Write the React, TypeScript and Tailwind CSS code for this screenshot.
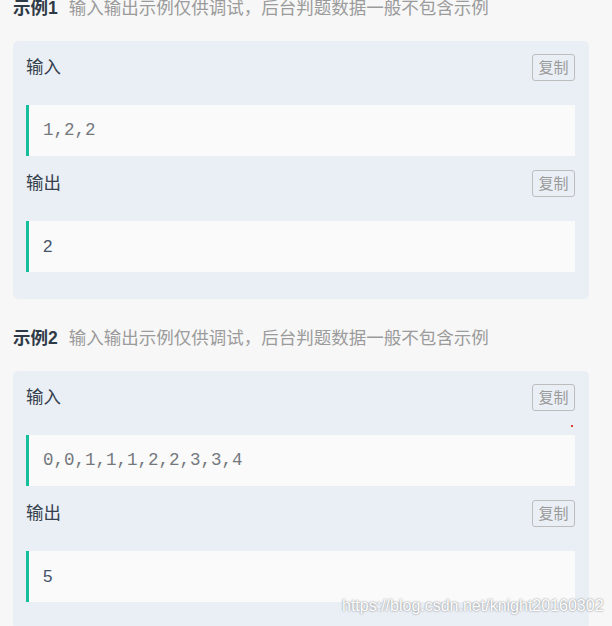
import React from 'react';

const cjk = "font-['Liberation_Sans','Noto_Sans_CJK_SC',sans-serif]";

type Example = { title: string; input: string; output: string };

const examples: Example[] = [
  { title: '示例1', input: '1,2,2', output: '2' },
  { title: '示例2', input: '0,0,1,1,1,2,2,3,3,4', output: '5' },
];

function CopyButton() {
  return (
    <button
      className={`${cjk} w-[43px] h-[27px] flex items-center justify-center rounded-[3px] border border-[#bdbdbd] text-[15px] leading-none text-[#9a9a9a]`}
    >
      复制
    </button>
  );
}

function Block({ label, value, mono }: { label: string; value: string; mono: boolean }) {
  return (
    <div>
      <div className="h-[27px] mb-[24px] flex items-center justify-between">
        <span className={`${cjk} text-[17.5px] leading-none text-[#35404d]`}>{label}</span>
        <CopyButton />
      </div>
      <div className="h-[51px] flex items-center bg-[#fafafa] border-l-[3px] border-[#16bf9c] pl-[14px]">
        {mono ? (
          <span className="font-['Liberation_Mono',monospace] text-[17.5px] leading-none text-[#74787d]">{value}</span>
        ) : (
          <span className={`${cjk} text-[17px] leading-none text-[#44526a]`}>{value}</span>
        )}
      </div>
    </div>
  );
}

function ExampleCard({ ex, first }: { ex: Example; first: boolean }) {
  return (
    <section className={first ? '' : 'mt-[31px]'}>
      <div className={`${cjk} h-[17px] flex items-center`}>
        <span className="text-[17.5px] font-bold text-[#2f3a47] leading-none">{ex.title}</span>
        <span className="ml-[11px] text-[17.5px] text-[#9b9b9b] leading-none">
          输入输出示例仅供调试，后台判题数据一般不包含示例
        </span>
      </div>
      <div className="mt-[24px] bg-[#eaeff6] rounded-[5px] pl-[13px] pr-[14px] pt-[13px] pb-[27px]">
        <Block label="输入" value={ex.input} mono={true} />
        <div className="mt-[14px]">
          <Block label="输出" value={ex.output} mono={false} />
        </div>
      </div>
    </section>
  );
}

export default function App() {
  return (
    <div className="relative w-[612px] h-[626px] overflow-hidden bg-[#f7f7f7]">
      <div className="w-[576px] ml-[13px]">
        {examples.map((ex, i) => (
          <ExampleCard key={ex.title} ex={ex} first={i === 0} />
        ))}
      </div>
      {/* stray red pixel */}
      <span className="absolute left-[571px] top-[425px] w-[2px] h-[2px] bg-[#e53935]" />
      {/* watermark */}
      <span className="absolute left-[342px] top-[598px] font-['Liberation_Sans',sans-serif] text-[16px] leading-none text-white [text-shadow:0_0_2px_#6f6f6f]">
        https://blog.csdn.net/knight20160302
      </span>
    </div>
  );
}
